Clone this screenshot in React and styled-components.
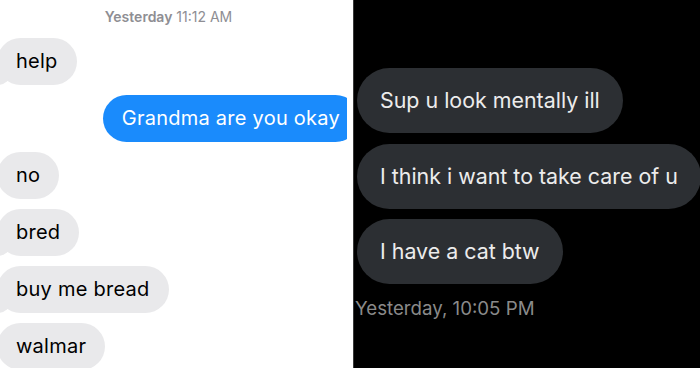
import React from "react";
import styled, { createGlobalStyle } from "styled-components";

const Global = createGlobalStyle`
  html, body { margin: 0; padding: 0; background: #000; }
  body { width: 700px; height: 368px; overflow: hidden; font-family: Inter, "Noto Sans", sans-serif; }
`;

const Page = styled.div`
  display: flex;
  width: 700px;
  height: 368px;
  overflow: hidden;
`;

const LightPanel = styled.section`
  width: 353px;
  height: 368px;
  background: #fff;
  padding-right: 6px;
  box-sizing: border-box;
  flex-shrink: 0;
`;

const LightThread = styled.div`
  height: 100%;
  overflow: hidden;
  display: flex;
  flex-direction: column;
  align-items: flex-start;
  gap: 10px;
  padding-top: 7px;
  box-sizing: border-box;
`;

const LightStamp = styled.div`
  align-self: stretch;
  text-align: center;
  padding-right: 10px;
  color: #8e8e93;
  font-size: 14px;
  line-height: 20px;
  margin-bottom: 1px;
  b { font-weight: 600; }
`;

const IBubble = styled.div`
  position: relative;
  flex-shrink: 0;
  white-space: nowrap;
  font-size: 20px;
  letter-spacing: 0.25px;
  line-height: 23px;
  padding: 12px 19px;
  border-radius: 24px;
  background: ${(p) => (p.$out ? "#1a8bfc" : "#e9e9eb")};
  color: ${(p) => (p.$out ? "#fff" : "#000")};
  align-self: ${(p) => (p.$out ? "flex-end" : "flex-start")};
  margin-left: ${(p) => (p.$out ? "0" : "-3px")};
  margin-right: ${(p) => (p.$out ? "-12px" : "0")};
  &::before {
    content: "";
    display: ${(p) => (p.$tail ? "block" : "none")};
    position: absolute;
    left: -4px;
    bottom: 0;
    width: 18px;
    height: 18px;
    background: #e9e9eb;
    border-bottom-right-radius: 14px 12px;
  }
`;

const DarkPanel = styled.section`
  flex: 1;
  height: 368px;
  background: #000;
  border-left: 1px solid #3a3a3a;
  box-sizing: border-box;
  display: flex;
  flex-direction: column;
  align-items: flex-start;
  gap: 10.5px;
  padding: 68px 0 0 3px;
`;

const DBubble = styled.div`
  white-space: nowrap;
  background: #2c2f33;
  color: #ececec;
  font-size: 21.4px;
  line-height: 25px;
  padding: 20px 23px;
  border-radius: 33px;
`;

const DarkStamp = styled.div`
  color: #8a8a8a;
  font-size: 18.7px;
  line-height: 24px;
  margin-left: -2px;
  margin-top: 2px;
`;

export default function App() {
  return (
    <Page>
      <Global />
      <LightPanel>
        <LightThread>
          <LightStamp>
            <b>Yesterday</b> 11:12 AM
          </LightStamp>
          <IBubble $tail>help</IBubble>
          <IBubble $out>Grandma are you okay</IBubble>
          <IBubble>no</IBubble>
          <IBubble $tail>bred</IBubble>
          <IBubble $tail>buy me bread</IBubble>
          <IBubble>walmar</IBubble>
        </LightThread>
      </LightPanel>
      <DarkPanel>
        <DBubble>Sup u look mentally ill</DBubble>
        <DBubble>I think i want to take care of u</DBubble>
        <DBubble>I have a cat btw</DBubble>
        <DarkStamp>Yesterday, 10:05 PM</DarkStamp>
      </DarkPanel>
    </Page>
  );
}
